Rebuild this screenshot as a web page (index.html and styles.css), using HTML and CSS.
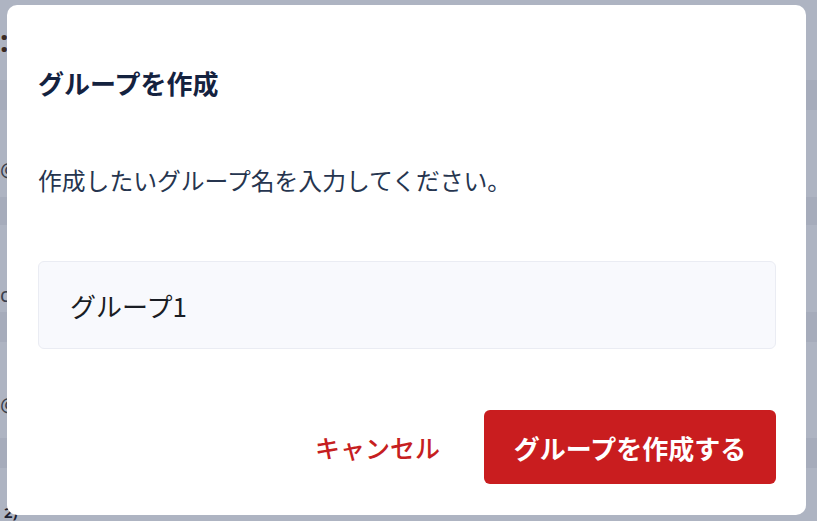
FILE: index.html
```html
<!DOCTYPE html>
<html lang="ja">
<head>
<meta charset="utf-8">
<title>グループを作成</title>
<link rel="stylesheet" href="styles.css">
</head>
<body>
<div class="page">
  <div class="row r1"><span class="glyph g-colon">:</span></div>
  <div class="band"></div>
  <div class="row r3"><span class="glyph">@</span></div>
  <div class="band"></div>
  <div class="row r5"><span class="glyph">c</span></div>
  <div class="band"></div>
  <div class="row r7"><span class="glyph">@</span></div>
  <div class="band"></div>
  <div class="row r9"><span class="glyph g-two">2)</span></div>
</div>
<div class="modal" role="dialog" aria-labelledby="mt">
  <h2 class="modal-title" id="mt">グループを作成</h2>
  <p class="modal-desc">作成したいグループ名を入力してください。</p>
  <div class="input">グループ1</div>
  <div class="actions">
    <button class="btn-cancel">キャンセル</button>
    <button class="btn-primary">グループを作成する</button>
  </div>
</div>
</body>
</html>
```
FILE: styles.css
```css
* { box-sizing: border-box; }
html, body { margin: 0; padding: 0; }
body {
  width: 817px;
  height: 521px;
  overflow: hidden;
  background: #aeb4c2;
  font-family: "Noto Sans CJK JP", "Noto Sans", sans-serif;
}
.page {
  display: grid;
  grid-template-rows: 80px 30px 87px 28px 87px 30px 96px 30px 1fr;
  height: 521px;
}
.row { padding-left: 0; }
.band { background: #a6acbb; }
.glyph {
  display: block;
  color: #3a3f4c;
  font-size: 20px;
  line-height: 24px;
  font-family: "Noto Sans", sans-serif;
}
.r1 { padding-top: 26px; }
.r3 { padding-top: 48px; }
.r5 { padding-top: 58px; }
.r7 { padding-top: 51px; }
.r9 { padding-top: 37px; }
.g-colon { color: #3b2a22; font-weight: 700; font-size: 30px; line-height: 30px; }
.g-two { color: #1d2231; font-weight: 700; padding-left: 4px; font-size: 15px; line-height: 14px; }

.modal {
  position: absolute;
  left: 7px;
  top: 5px;
  width: 799px;
  height: 510px;
  background: #ffffff;
  border-radius: 10px;
  padding: 60px 30px 0 31px;
  display: flex;
  flex-direction: column;
}
.modal-title {
  margin: 0;
  font-size: 26px;
  line-height: 36px;
  font-weight: 700;
  color: #14223f;
}
.modal-desc {
  margin: 61px 0 0;
  font-size: 23.8px;
  line-height: 36px;
  font-weight: 400;
  color: #26354f;
}
.input {
  margin-top: 63px;
  height: 88px;
  background: #f8f9fd;
  border: 1px solid #eaecf3;
  border-radius: 6px;
  padding-left: 31px;
  display: flex;
  align-items: center;
  font-size: 26px;
  color: #1a1d24;
}
.actions {
  margin-top: 61px;
  display: flex;
  justify-content: flex-end;
  align-items: center;
  gap: 44px;
}
.btn-cancel {
  border: none;
  background: transparent;
  color: #c61e21;
  font-family: inherit;
  font-size: 25px;
  font-weight: 500;
  padding: 0;
}
.btn-primary {
  border: none;
  background: #c91d1f;
  color: #ffffff;
  font-family: inherit;
  font-size: 26px;
  font-weight: 700;
  height: 74px;
  width: 292px;
  border-radius: 6px;
  padding: 0;
}
```
